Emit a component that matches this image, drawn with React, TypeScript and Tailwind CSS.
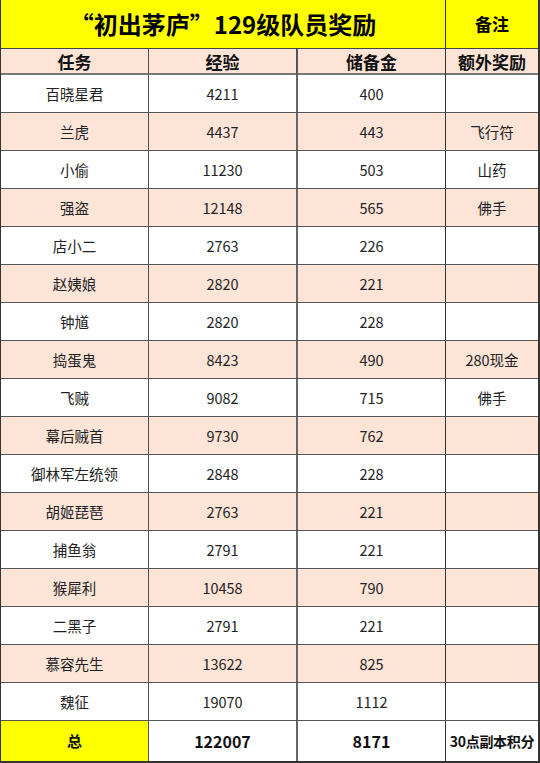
import React from "react";

type Row = { name: string; exp: string; gold: string; extra?: string };

const rows: Row[] = [
  { name: "百晓星君", exp: "4211", gold: "400" },
  { name: "兰虎", exp: "4437", gold: "443", extra: "飞行符" },
  { name: "小偷", exp: "11230", gold: "503", extra: "山药" },
  { name: "强盗", exp: "12148", gold: "565", extra: "佛手" },
  { name: "店小二", exp: "2763", gold: "226" },
  { name: "赵姨娘", exp: "2820", gold: "221" },
  { name: "钟馗", exp: "2820", gold: "228" },
  { name: "捣蛋鬼", exp: "8423", gold: "490", extra: "280现金" },
  { name: "飞贼", exp: "9082", gold: "715", extra: "佛手" },
  { name: "幕后贼首", exp: "9730", gold: "762" },
  { name: "御林军左统领", exp: "2848", gold: "228" },
  { name: "胡姬琵琶", exp: "2763", gold: "221" },
  { name: "捕鱼翁", exp: "2791", gold: "221" },
  { name: "猴犀利", exp: "10458", gold: "790" },
  { name: "二黑子", exp: "2791", gold: "221" },
  { name: "慕容先生", exp: "13622", gold: "825" },
  { name: "魏征", exp: "19070", gold: "1112" },
];

const font = { fontFamily: '"Noto Sans CJK SC", "Noto Sans", sans-serif' };

const App: React.FC = () => {
  return (
    <div className="w-[540px] h-[763px] bg-white overflow-hidden" style={font}>
      <div className="w-[540px] border-l border-r-2 border-[#333]">
        {/* title */}
        <div className="grid grid-cols-[445px_1fr] h-[49px] bg-[#ffff00] border-b border-[#444]">
          <div className="flex items-center justify-center border-r border-[#333] text-[24px] font-bold text-black">
            “初出茅庐”129级队员奖励
          </div>
          <div className="flex items-center justify-center text-[17px] font-bold text-black">
            备注
          </div>
        </div>

        {/* column heads */}
        <div className="grid grid-cols-[148px_149px_148px_1fr] h-[26px] bg-[#fce4d6] border-b-2 border-[#777] text-[17px] font-bold text-[#111]">
          <div className="flex items-center justify-center border-r border-[#555]">任务</div>
          <div className="flex items-center justify-center border-r-2 border-[#555]">经验</div>
          <div className="flex items-center justify-center border-r border-[#333]">储备金</div>
          <div className="flex items-center justify-center">额外奖励</div>
        </div>

        {rows.map((r, i) => (
          <div
            key={r.name}
            className={`grid grid-cols-[148px_149px_148px_1fr] h-[38px] border-b border-[#555] text-[14.5px] text-[#222] ${
              i % 2 === 1 ? "bg-[#fce4d6]" : "bg-white"
            }`}
          >
            <div className="flex items-center justify-center border-r border-[#555]">{r.name}</div>
            <div className="flex items-center justify-center border-r-2 border-[#666]">{r.exp}</div>
            <div className="flex items-center justify-center border-r border-[#333]">{r.gold}</div>
            <div className="flex items-center justify-center">{r.extra ?? ""}</div>
          </div>
        ))}

        {/* total */}
        <div className="grid grid-cols-[148px_149px_148px_1fr] h-[42px] border-b-2 border-[#333] text-[15px] font-bold text-[#111] bg-white">
          <div className="flex items-center justify-center border-r border-[#555] bg-[#ffff00]">总</div>
          <div className="flex items-center justify-center border-r-2 border-[#666] text-[16px]">122007</div>
          <div className="flex items-center justify-center border-r border-[#333] text-[16px]">8171</div>
          <div className="flex items-center justify-center whitespace-nowrap text-[14px] tracking-[-0.3px]">30点副本积分</div>
        </div>
      </div>
    </div>
  );
};

export default App;
